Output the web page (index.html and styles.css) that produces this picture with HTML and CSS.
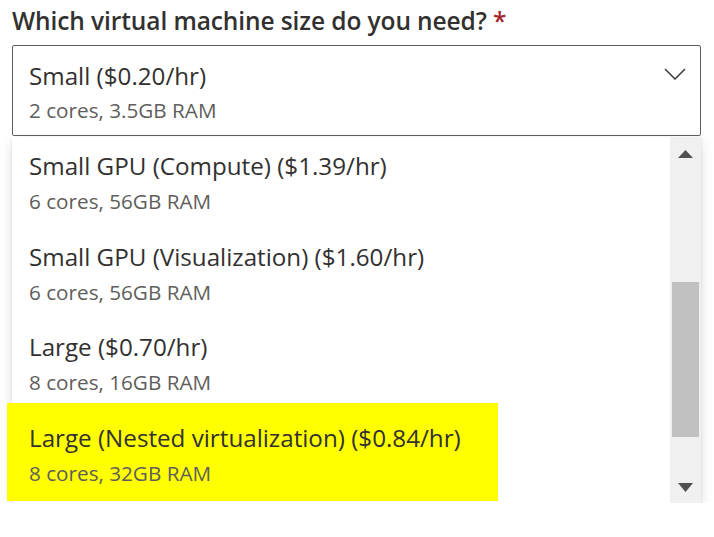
FILE: index.html
```html
<!DOCTYPE html>
<html lang="en">
<head>
<meta charset="utf-8">
<title>VM size</title>
<link rel="stylesheet" href="styles.css">
</head>
<body>
<div class="page">
  <div class="label">Which virtual machine size do you need? <span class="req">*</span></div>
  <div class="select">
    <div class="select-text">
      <div class="opt-title">Small ($0.20/hr)</div>
      <div class="opt-sub">2 cores, 3.5GB RAM</div>
    </div>
    <svg class="chevron" width="22" height="12" viewBox="0 0 22 12"><polyline points="1,1 11,11 21,1" fill="none" stroke="#3b3a39" stroke-width="1.5"/></svg>
  </div>
  <div class="dropdown">
    <div class="list">
      <div class="item">
        <div class="opt-title">Small GPU (Compute) ($1.39/hr)</div>
        <div class="opt-sub">6 cores, 56GB RAM</div>
      </div>
      <div class="item">
        <div class="opt-title">Small GPU (Visualization) ($1.60/hr)</div>
        <div class="opt-sub">6 cores, 56GB RAM</div>
      </div>
      <div class="item">
        <div class="opt-title">Large ($0.70/hr)</div>
        <div class="opt-sub">8 cores, 16GB RAM</div>
      </div>
      <div class="item highlighted">
        <div class="opt-title">Large (Nested virtualization) ($0.84/hr)</div>
        <div class="opt-sub">8 cores, 32GB RAM</div>
      </div>
    </div>
    <div class="scrollbar">
      <div class="arrow arrow-up"><svg width="15" height="8" viewBox="0 0 15 8"><polygon points="7.5,0 15,8 0,8" fill="#505050"/></svg></div>
      <div class="track"><div class="thumb"></div></div>
      <div class="arrow arrow-down"><svg width="15" height="9" viewBox="0 0 15 9"><polygon points="0,0 15,0 7.5,9" fill="#505050"/></svg></div>
    </div>
  </div>
</div>
</body>
</html>
```
FILE: styles.css
```css
html, body {
  margin: 0;
  padding: 0;
  background: #ffffff;
}
body {
  font-family: "Open Sans", "Noto Sans", sans-serif;
  color: #323130;
}
.page {
  padding: 4px 13px 0 12px;
  width: 689px;
}
.label {
  font-size: 24.5px;
  font-weight: 600;
  line-height: 34px;
  height: 41px;
  letter-spacing: -0.1px;
  white-space: nowrap;
}
.req {
  color: #a4262c;
  font-weight: 600;
}
.select {
  border: 1px solid #605e5c;
  border-radius: 2px;
  height: 89px;
  display: flex;
  align-items: flex-start;
  justify-content: space-between;
  padding: 0 14px 0 16px;
}
.select-text {
  padding-top: 16px;
}
.chevron {
  margin-top: 22px;
}
.opt-title {
  font-size: 24.2px;
  line-height: 28px;
  color: #323130;
  white-space: nowrap;
}
.opt-sub {
  font-size: 20.7px;
  line-height: 24px;
  margin-top: 8px;
  color: #605e5c;
  white-space: nowrap;
}
.dropdown {
  display: flex;
  height: 366px;
  background: #ffffff;
  border-radius: 0 0 3px 3px;
  box-shadow: 0 5.6px 12.6px rgba(0, 0, 0, 0.13), 0 1px 3px rgba(0, 0, 0, 0.11);
  margin-top: 1px;
}
.list {
  flex: 1;
}
.item {
  position: relative;
  height: 90.5px;
  box-sizing: border-box;
  padding: 15px 16px 0 17px;
}
.item .opt-sub {
  margin-top: 9px;
}
.item > div {
  position: relative;
}
.highlighted::before {
  content: "";
  position: absolute;
  left: -5px;
  top: -5.5px;
  width: 491px;
  height: 98px;
  background: #ffff00;
}
.scrollbar {
  width: 31px;
  background: #f0f0f0;
  display: flex;
  flex-direction: column;
  border-radius: 0 0 3px 0;
}
.arrow {
  display: flex;
  justify-content: center;
  align-items: center;
}
.arrow-up {
  height: 33px;
}
.track {
  flex: 1;
  padding: 112px 2px 0 2px;
}
.thumb {
  height: 155px;
  background: #c1c1c1;
}
.arrow-down {
  height: 31px;
}
```
